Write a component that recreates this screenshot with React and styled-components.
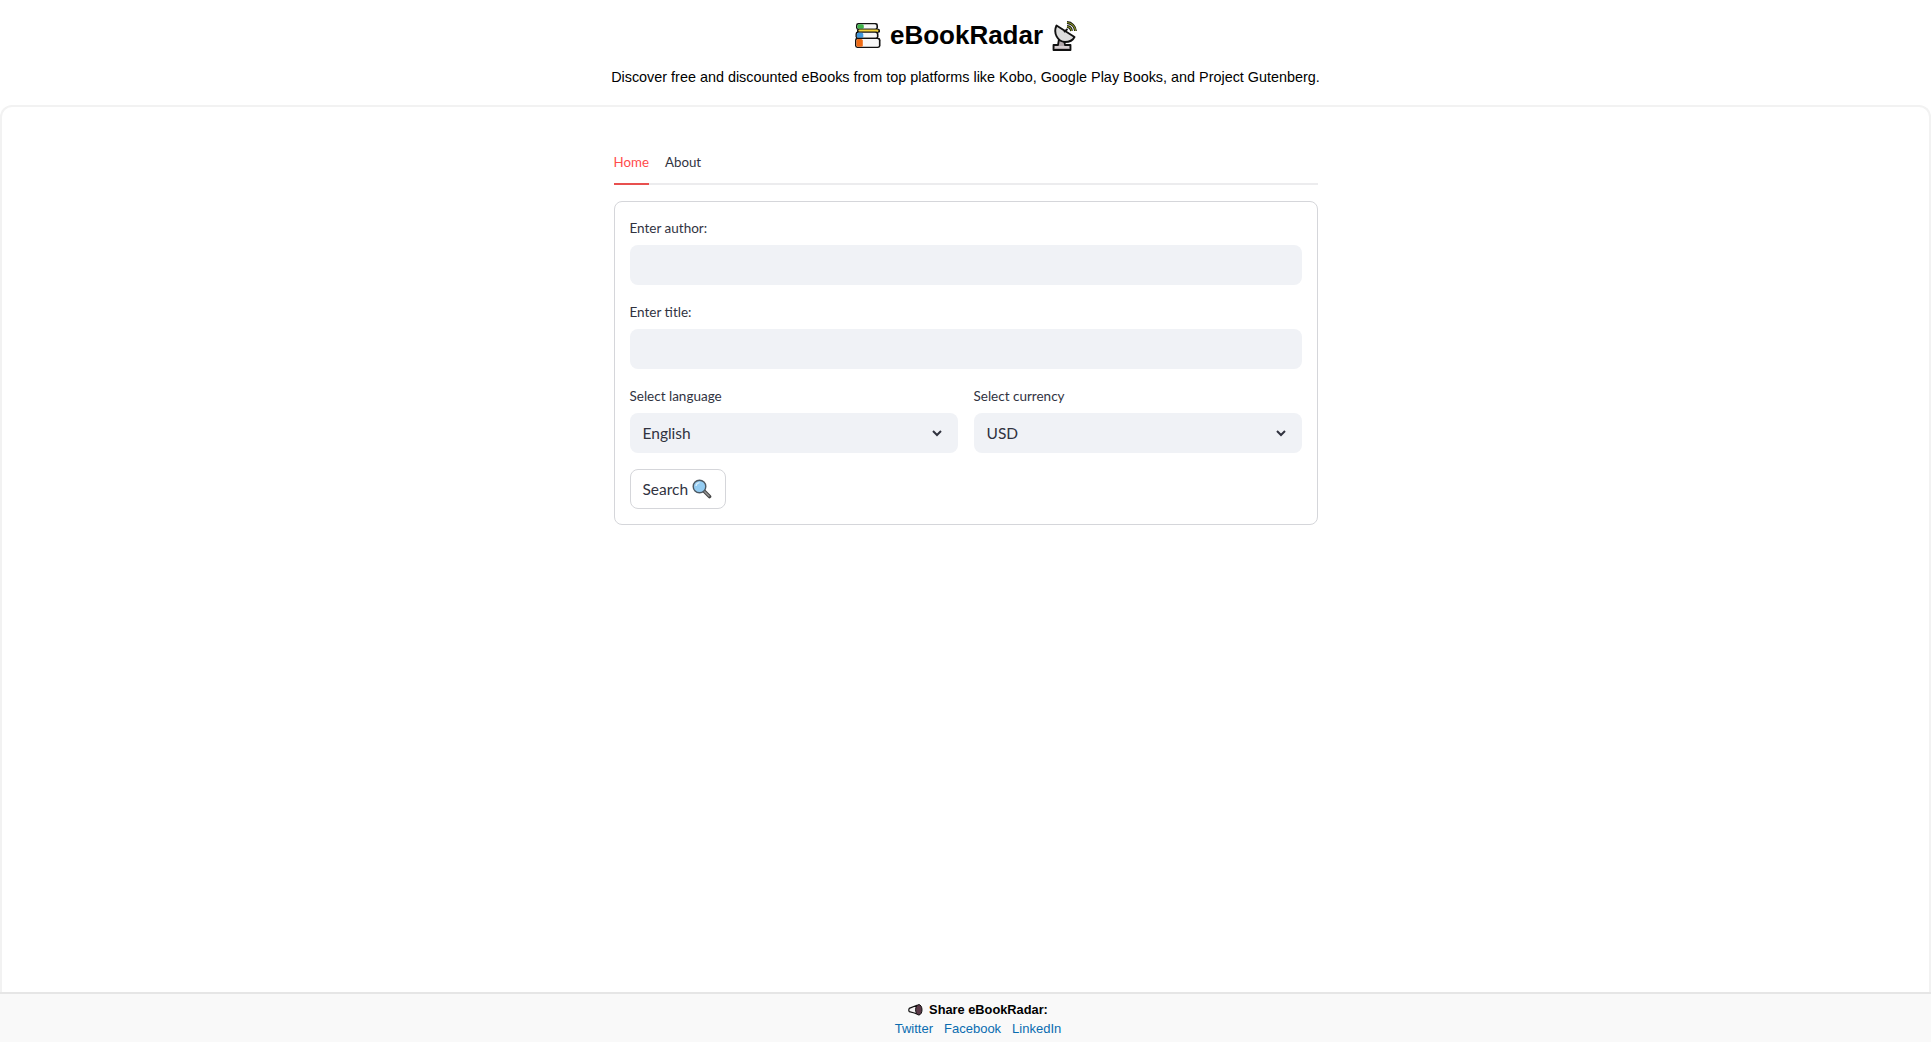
import React from 'react';
import styled, { createGlobalStyle } from 'styled-components';

const Global = createGlobalStyle`
  html, body { margin: 0; padding: 0; height: 100%; background: #fff; }
  #root { height: 100%; }
  * { box-sizing: border-box; }
`;
const Page = styled.div`
  height: 1042px; display: flex; flex-direction: column; overflow: hidden;
  font-family: "Lato", "Noto Sans", sans-serif; color: #31333f;
`;
const Header = styled.header`
  height: 105px; flex: none; text-align: center; color: #000;
  font-family: "Liberation Sans", Arial, sans-serif; padding-top: 17px;
`;
const Title = styled.h1`
  margin: 0; height: 36px; display: flex; align-items: center; justify-content: center; gap: 8px;
  padding-left: 2px;
  font-size: 26px; font-weight: 700; line-height: 36px; color: #000;
`;
const Tagline = styled.p`
  margin: 15px 0 0; font-size: 14.4px; line-height: 18px; color: #000;
`;
const Panel = styled.main`
  flex: 1; border: 2px solid #f2f2f2; border-bottom: 0; border-radius: 12px 12px 0 0;
  display: flex; justify-content: center; padding-top: 38px;
`;
const Column = styled.div`width: 704px;`;
const Tabs = styled.nav`
  display: flex; gap: 16px; height: 40px; border-bottom: 2px solid #ececee;
`;
const Tab = styled.a`
  height: 40px; padding-top: 8px; font-size: 13.3px; line-height: 19px;
  color: ${p => (p.$active ? '#ff4b4b' : '#31333f')};
  border-bottom: 2px solid ${p => (p.$active ? '#e8504f' : 'transparent')};
`;
const Card = styled.form`
  margin-top: 16px; border: 1px solid #d5d6da; border-radius: 8px; padding: 15px;
  display: flex; flex-direction: column; gap: 16px;
`;
const Field = styled.div`min-width: 0;`;
const Label = styled.label`
  display: block; height: 28px; padding-top: 1px; font-size: 13.5px; line-height: 20px; color: #31333f;
`;
const Input = styled.div`
  height: 40px; border-radius: 8px; background: #f0f2f6;
`;
const Select = styled(Input)`
  display: flex; align-items: center; justify-content: space-between; padding: 0 13px;
  font-size: 15.5px; line-height: 38px; color: #31333f;
`;
const Row = styled.div`
  display: flex; gap: 16px;
  & > ${Field} { flex: 1; }
`;
const Button = styled.button`
  align-self: flex-start; height: 40px; width: 96px; padding: 0 12px; border: 1px solid #d5d6da; border-radius: 8px;
  background: #fff; font: inherit; font-size: 15.5px; color: #31333f;
  display: flex; align-items: center; gap: 4px;
`;
const Footer = styled.footer`
  flex: none; height: 50px; background: #f9f9f9; border-top: 2px solid #e6e6e6;
  text-align: center; font-family: "Liberation Sans", Arial, sans-serif; font-size: 13px; line-height: 19px;
  padding: 6px 0 0 25px;
`;
const Share = styled.div`
  display: flex; align-items: center; justify-content: center; gap: 6px; font-size: 12.8px; font-weight: 700; color: #000; height: 19px;
`;
const Links = styled.div`display: flex; justify-content: center; gap: 11px;`;
const Link = styled.a`color: #0a6cb0; text-decoration: none;`;

const Book = ({ y, h, x, w, spine }) => (
  <g>
    <rect x={x} y={y} width={w} height={h} rx="2.4" fill="#111" />
    <rect x={x + 1.4} y={y + 1.2} width={w - 3} height={h - 2.4} rx="1.6" fill="#f7f7f7" />
    <rect x={x + 1.4} y={y + 1.2} width="6.4" height={h - 2.4} rx="1.6" fill={spine} />
  </g>
);
const Books = () => (
  <svg width="28" height="28" viewBox="0 0 28 28">
    <Book x={2} y={2} w={22} h={7} spine="#3fb54a" />
    <rect x="3" y="7.8" width="23" height="4" rx="1.6" fill="#111" />
    <rect x="4.4" y="8.6" width="20" height="2.4" rx="1.2" fill="#f3d23a" />
    <Book x={1.5} y={10.6} w={23} h={7.4} spine="#3f97dc" />
    <Book x={1} y={16.8} w={25.5} h={10.2} spine="#ee6a14" />
  </svg>
);
const Dish = () => (
  <svg width="28" height="31" viewBox="4 3 28 31">
    <path d="M12 22 L11 28 H6.5 V33 H23.5 V28 H18 L17 23 Z" fill="#b3a9ad" stroke="#111" strokeWidth="1.8" strokeLinejoin="round" />
    <path d="M8 30 H22" stroke="#e4dfe0" strokeWidth="1.4" />
    <path d="M9.5 8.5 C6 16 10.5 24.5 18 25 C22.5 25 26 23 27.5 20 Z" fill="#dcdcdc" stroke="#111" strokeWidth="1.9" strokeLinejoin="round" />
    <path d="M17 15 L20.5 12" stroke="#111" strokeWidth="1.8" />
    <path d="M20 9.5 A5 5 0 0 1 24.5 14" fill="none" stroke="#111" strokeWidth="2.8" />
    <path d="M20 9.5 A5 5 0 0 1 24.5 14" fill="none" stroke="#8f9c2b" strokeWidth="1.1" />
    <path d="M20 5.5 A9 9 0 0 1 28.5 14" fill="none" stroke="#111" strokeWidth="2.8" />
    <path d="M20 5.5 A9 9 0 0 1 28.5 14" fill="none" stroke="#8f9c2b" strokeWidth="1.1" />
  </svg>
);
const Lens = () => (
  <svg width="20" height="20" viewBox="0 0 20 20">
    <path d="M11.5 11.5 L17.5 17.5" stroke="#444" strokeWidth="3.6" strokeLinecap="round" />
    <path d="M12 12 L17 17" stroke="#999" strokeWidth="1.4" strokeLinecap="round" />
    <circle cx="7.5" cy="7.5" r="6.3" fill="#93ccf2" stroke="#4d5862" strokeWidth="1.4" />
    <path d="M4 7 A4 4 0 0 1 7.5 3.6" fill="none" stroke="#d8eefb" strokeWidth="1.4" />
  </svg>
);
const Horn = () => (
  <svg width="15" height="12" viewBox="0 0 15 12">
    <path d="M1.2 4.4 L9 1.2 L10 10.4 L6.4 9 L1.2 7.6 Q0.4 6 1.2 4.4 Z" fill="#f4f2f3" stroke="#111" strokeWidth="1.2" strokeLinejoin="round" />
    <ellipse cx="10.8" cy="5.8" rx="3.2" ry="5.2" fill="#5b3a48" stroke="#111" strokeWidth="1" />
  </svg>
);
const Chevron = () => (
  <svg width="16" height="16" viewBox="0 0 16 16" fill="none">
    <path d="M4 6 L8 10 L12 6" stroke="#31333f" strokeWidth="2" />
  </svg>
);

export default function App() {
  return (
    <Page>
      <Global />
      <Header>
        <Title><Books />eBookRadar<Dish /></Title>
        <Tagline>Discover free and discounted eBooks from top platforms like Kobo, Google Play Books, and Project Gutenberg.</Tagline>
      </Header>
      <Panel>
        <Column>
          <Tabs>
            <Tab $active>Home</Tab>
            <Tab>About</Tab>
          </Tabs>
          <Card>
            <Field><Label>Enter author:</Label><Input /></Field>
            <Field><Label>Enter title:</Label><Input /></Field>
            <Row>
              <Field><Label>Select language</Label><Select>English<Chevron /></Select></Field>
              <Field><Label>Select currency</Label><Select>USD<Chevron /></Select></Field>
            </Row>
            <Button type="button">Search <Lens /></Button>
          </Card>
        </Column>
      </Panel>
      <Footer>
        <Share><Horn />Share eBookRadar:</Share>
        <Links><Link>Twitter</Link><Link>Facebook</Link><Link>LinkedIn</Link></Links>
      </Footer>
    </Page>
  );
}
